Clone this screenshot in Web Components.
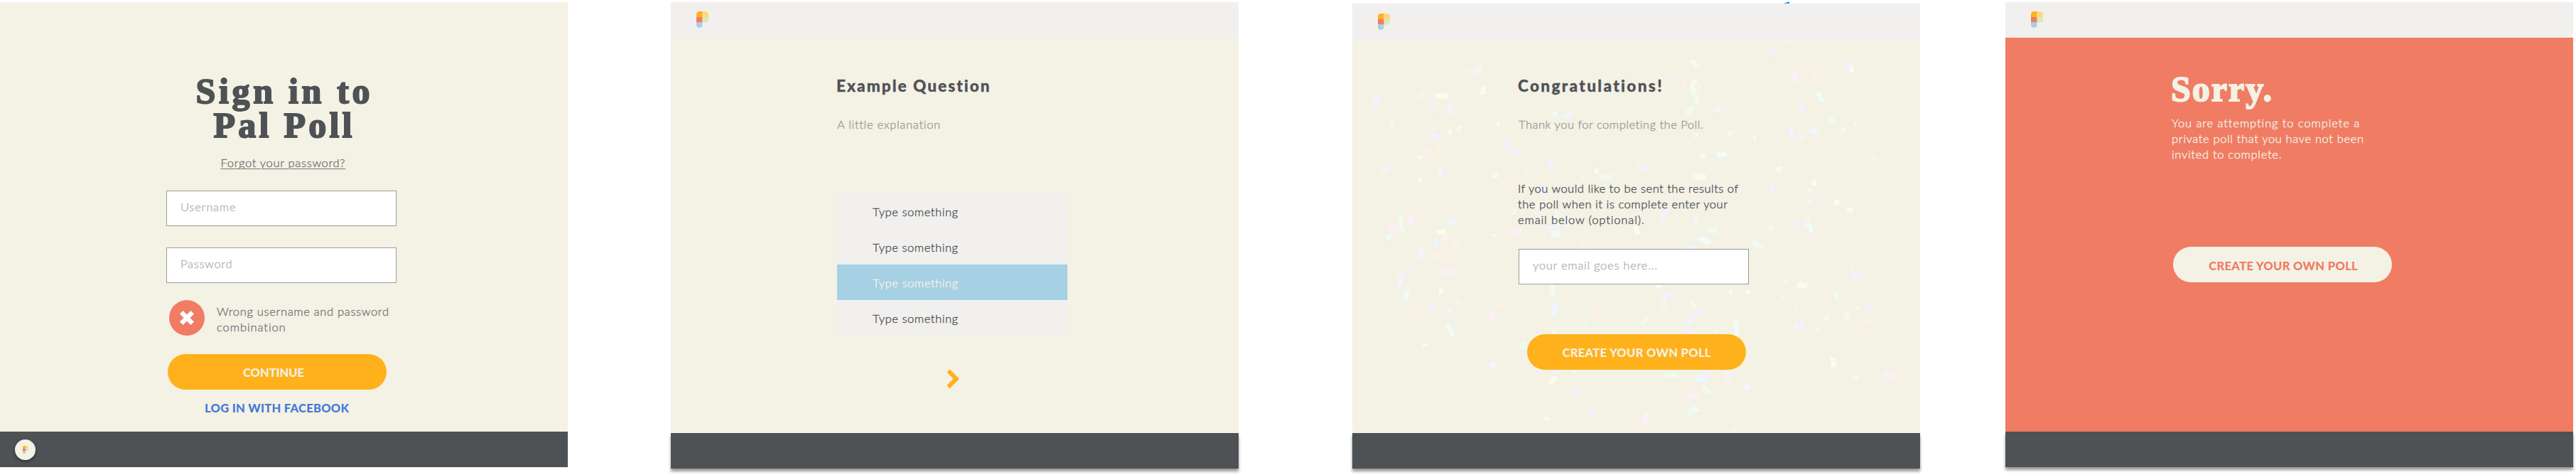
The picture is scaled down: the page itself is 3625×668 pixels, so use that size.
<!DOCTYPE html>
<html lang="en">
<head>
<meta charset="utf-8">
<title>Pal Poll</title>
<style>
body{margin:0;background:#fff;font-family:Lato,"Open Sans",sans-serif;font-size:16.5px;font-weight:300;line-height:22px;color:#4e5255;-webkit-text-stroke:.35px currentColor}
.board{display:flex;align-items:flex-start;width:3625px;height:668px;overflow:hidden}
</style>
</head>
<body>
<div class="board">
  <poll-screen style="--top:3px;--body:604px" plain>
    <sign-in-form></sign-in-form>
    <footer-badge slot="footer"></footer-badge>
  </poll-screen>
  <poll-screen style="--left:145px;--top:3px;--head:50px;--body:556px" raised>
    <question-view></question-view>
  </poll-screen>
  <poll-screen style="--left:160px;--top:5px;--head:51px;--body:553px;--logo:1px" raised>
    <confetti-layer slot="backdrop"></confetti-layer>
    <thanks-view></thanks-view>
  </poll-screen>
  <poll-screen style="--left:120px;--top:3px;--head:50px;--body:554px;--bg:#f07c64" raised>
    <sorry-view></sorry-view>
  </poll-screen>
</div>
<script>
const define = (name, html, setup) => customElements.define(name, class extends HTMLElement {
  connectedCallback() {
    if (this.shadowRoot) return;
    this.attachShadow({ mode: 'open' }).innerHTML = html;
    if (setup) setup(this, this.shadowRoot);
  }
});

/* One screen: optional top bar, body, footer */
define('poll-screen', `
<style>
:host{display:flex;flex-direction:column;flex:none;width:799px;margin-left:var(--left,0);margin-top:var(--top)}
header{box-sizing:border-box;height:var(--head);background:#f2f0ee;padding:calc(13px + var(--logo,0px)) 0 0 36px}
:host([plain]) header{display:none}
main{height:var(--body);background:var(--bg,#f4f1e5);display:grid;overflow:visible}
::slotted(confetti-layer),.content{grid-area:1/1}
.content{padding-left:234px;position:relative}
footer{height:50px;background:#4e5255;display:flex;align-items:center;padding-left:21px;box-sizing:border-box}
:host([raised]) footer{box-shadow:0 4px 4px rgba(0,0,0,.4)}
</style>
<header><poll-logo></poll-logo></header>
<main><slot name="backdrop"></slot><div class="content"><slot></slot></div></main>
<footer><slot name="footer"></slot></footer>`);

define('poll-logo', `
<style>:host{display:block;width:17px;height:23px}:host([small]){width:8px;height:11px}svg{display:block;width:100%;height:100%}</style>
<svg viewBox="0 0 17 23" preserveAspectRatio="none">
<path d="M8.4 0H12.5Q17 0 17 4.5V8H8.4Z" fill="#fdd87f"/><path d="M8.4 8H17V11Q17 15.8 12.5 15.8H8.4Z" fill="#dde7b8"/>
<path d="M0 4.5Q0 0 4.2 0H8.4V8H0Z" fill="#ffb11b"/><path d="M0 8H8.4V15.6H0Z" fill="#f07c64"/>
<path d="M0 15.6H8.4V19Q8.4 23 4.2 23T0 19Z" fill="#a6d0e4"/></svg>`);

define('footer-badge', `
<style>:host{display:grid;place-items:center;width:29px;height:29px;border-radius:50%;background:#f4f1e5;box-shadow:0 2px 4px rgba(0,0,0,.45)}</style>
<poll-logo small></poll-logo>`);

define('text-field', `
<style>:host{display:block;box-sizing:border-box;width:324px;height:50px;background:#fff;border:1px solid #9b9d9a;color:#b3b3b0;padding:11px 0 0 19px}</style>
<slot></slot>`);

define('pill-button', `
<style>:host{display:flex;justify-content:center;align-items:center;box-sizing:border-box;width:308px;height:50px;border-radius:25px;background:var(--fill,#ffb11b);color:var(--ink,#f4f1e5);font-weight:900;font-size:16.5px;padding-top:2px;-webkit-text-stroke:0}</style>
<slot></slot>`);

const display = `.display{font:bold 50px/48px "Liberation Serif",serif;-webkit-text-stroke:1.9px currentColor}`;

define('sign-in-form', `
<style>:host{display:block}${display}
.center{width:328px;display:flex;flex-direction:column;align-items:center;padding-top:101px}
.forgot{line-height:20px;margin-top:19px;color:#747674;text-decoration:underline;text-underline-offset:2px;text-decoration-thickness:1px}
text-field{margin-top:29px}text-field+text-field{margin-top:30px}
.error{display:flex;gap:17px;margin:24px 0 0 4px;color:#747674}
.error svg{width:50px;height:50px}.error div{padding-top:5px}
pill-button{margin:26px 0 0 2px;padding-right:10px}
.fb{margin:15px 0 0 54px;color:#4479d8;font-weight:900;font-size:16.5px;-webkit-text-stroke:0}</style>
<div class="center"><fit-text class="display" w="245">Sign in to</fit-text><fit-text class="display" w="195">Pal Poll</fit-text>
<fit-text class="forgot" w="175">Forgot your password?</fit-text></div>
<text-field><fit-text w="77.5">Username</fit-text></text-field>
<text-field><fit-text w="72.5">Password</fit-text></text-field>
<div class="error"><svg viewBox="0 0 50 50"><circle cx="25" cy="25" r="25" fill="#f07c64"/><path d="M17.3 17.3 32.7 32.7M32.7 17.3 17.3 32.7" stroke="#fff" stroke-width="6.4"/></svg>
<div><fit-text w="242">Wrong username and password</fit-text><fit-text w="97">combination</fit-text></div></div>
<pill-button><fit-text w="86">CONTINUE</fit-text></pill-button>
<fit-text class="fb" w="203">LOG IN WITH FACEBOOK</fit-text>`);

const titles = `.title{font-size:22.5px;font-weight:900;line-height:26px;padding-top:55px;margin-left:-1px}.sub{margin:31px 0 0 0;line-height:20px;color:#9b9c97}`;

define('question-view', `
<style>:host{display:block}${titles}
svg{display:block;margin:46px 0 0 153px}</style>
<fit-text class="title" w="216">Example Question</fit-text>
<fit-text class="sub" w="145">A little explanation</fit-text>
<option-list></option-list>
<svg width="20" height="30" viewBox="0 0 20 30"><path d="M3.5 3.3 14.7 14.7 3.5 26.2" fill="none" stroke="#ffb11b" stroke-width="6"/></svg>`);

define('option-list', `
<style>:host{display:block;width:324px;margin-top:87px;border-radius:10px;overflow:hidden;background:#f2f0ee}
.row{height:50px;box-sizing:border-box;padding:15px 0 0 50px}.on{background:#a6d0e4;color:#f4f1e5}</style>
<div class="row"><fit-text w="120">Type something</fit-text></div>
<div class="row"><fit-text w="120">Type something</fit-text></div>
<div class="row on"><fit-text w="120">Type something</fit-text></div>
<div class="row"><fit-text w="120">Type something</fit-text></div>`);

define('thanks-view', `
<style>:host{display:block}${titles}
.title{padding-top:52px}.para{margin:69px 0 0 -1px}text-field{margin-top:30px}pill-button{margin:70px 0 0 12px}
.cursor{position:absolute;left:606px;top:-54px}</style>
<svg class="cursor" width="10" height="3" viewBox="0 0 10 3"><path d="M0 3Q5 2 8.5 0L9.5 3Z" fill="#2196f3"/></svg>
<fit-text class="title" w="203">Congratulations!</fit-text>
<fit-text class="sub" w="260">Thank you for completing the Poll.</fit-text>
<div class="para"><fit-text w="310">If you would like to be sent the results of</fit-text><fit-text w="295">the poll when it is complete enter your</fit-text><fit-text w="178">email below (optional).</fit-text></div>
<text-field><fit-text w="175">your email goes here...</fit-text></text-field>
<pill-button><fit-text w="209">CREATE YOUR OWN POLL</fit-text></pill-button>`);

define('sorry-view', `
<style>:host{display:block;color:#f4f1e5}${display}
.display{padding-top:48px;margin-left:-1px}.para{margin:13px 0 0 0}
pill-button{margin:119px 0 0 2px;padding-top:3px;padding-left:2px;--fill:#f4f1e5;--ink:#f07c64}</style>
<fit-text class="display" w="142">Sorry.</fit-text>
<div class="para"><fit-text w="264">You are attempting to complete a</fit-text><fit-text w="270">private poll that you have not been</fit-text><fit-text w="154.5">invited to complete.</fit-text></div>
<pill-button><fit-text w="209.5">CREATE YOUR OWN POLL</fit-text></pill-button>`);

/* Confetti pieces: centre x, centre y, width, height, rotation, colour key */
const tints = { v:'#f4f0fd', p:'#fdf0f5', o:'#fdf1e7', m:'#f0fbee', a:'#f0fcf8', b:'#eff6fd', y:'#fdfde6', c:'#fdfaec' };
const pieces = `523 207 12 30 -20 o|284 228 12 16 0 v|346 300 34 20 0 p|364 292 10 24 15 m|373 381 13 38 3 y|87 425 13 50 12 v|212 401 13 36 0 p|262 405 32 22 0 y|241 429 12 28 -15 v|286 465 13 44 -8 b|271 460 12 24 20 o|294 380 4 18 10 m|130 525 15 28 -15 m|243 541 9 22 5 m|243 573 28 22 -20 v|285 558 12 22 0 y|309 542 7 20 25 y|251 511 12 7 0 v|323 530 4 22 10 v|413 522 6 22 0 y|252 623 13 28 0 o|222 632 20 20 10 p|206 663 12 16 0 a|434 612 12 48 -12 v|462 640 18 26 30 v|117 715 16 22 0 b|107 735 13 34 8 o|259 733 13 36 4 b|206 761 12 22 0 c|405 740 16 22 15 a|490 731 9 18 20 b|553 703 13 44 -20 v|526 749 12 22 0 o|448 778 24 22 -20 o|245 790 5 16 -20 v|569 336 8 24 5 b|600 482 18 34 30 b|564 481 11 22 0 a|544 570 12 28 0 o|550 607 11 26 -10 p|553 540 12 26 20 m|658 447 14 6 0 o|876 331 9 18 25 v|907 343 13 40 5 o|935 268 15 32 -25 c|933 360 16 46 5 c|936 405 13 65 -14 m|921 465 16 36 25 m|945 363 18 24 25 o|848 358 16 32 0 o|995 460 18 22 0 p|831 473 5 22 0 m|938 572 12 22 0 m|1029 562 14 22 15 m|928 607 10 12 0 v|956 659 14 22 0 c|1007 652 26 22 -15 a|1001 679 8 18 30 b|1142 222 15 22 10 v|1245 195 11 18 -20 o|1188 171 12 6 0 m|1187 273 7 7 0 b|1201 327 16 38 5 p|1253 321 13 48 6 o|1346 282 15 46 24 v|1353 292 10 28 0 y|1269 409 13 46 -17 a|1222 453 12 38 -5 v|1299 507 17 32 -28 m|1330 547 13 20 0 a|1252 554 20 26 -30 b|1193 563 12 52 -5 v|1219 580 15 26 -20 p|1094 584 6 22 -10 a|1376 603 15 32 18 o|1411 668 15 28 -20 p|1158 713 15 24 20 c|1239 696 12 7 0 o|1363 528 4 16 -20 y|788 702 12 32 -5 o|801 714 13 26 8 v|701 747 30 22 0 m|674 722 12 20 0 a|638 744 5 20 10 a|947 746 34 26 10 c|933 800 26 30 20 p|1140 796 13 32 0 v|1252 772 14 22 0 y|1241 800 5 22 5 y|1243 851 13 16 0 b|1271 828 4 20 0 b|1312 854 14 22 0 y|1347 886 15 22 0 y|938 933 13 28 8 b|855 905 13 62 17 v|815 798 13 34 20 p|530 805 18 40 0 v|597 940 13 50 0 b|568 920 13 60 3 m|561 965 30 26 0 v|520 870 16 38 -25 m|456 894 10 22 0 a|153 925 13 36 5 m|181 930 13 42 7 p|136 965 26 28 20 p|157 962 11 42 -10 m|122 1001 14 20 0 a|288 937 18 26 -25 b|262 980 24 22 0 y|273 1003 18 24 25 p|458 978 22 34 30 p|402 993 10 10 25 y|566 988 26 28 0 m|780 971 14 34 -15 y|982 972 28 24 10 m|1106 967 9 14 -20 v|1138 964 13 20 0 m|1211 941 14 28 -10 v|1233 940 15 40 8 p|1242 963 12 36 -10 a|962 1015 22 36 -40 a|247 1023 12 32 -10 b|299 1026 18 34 25 o|207 1070 13 42 12 p|247 1078 30 24 0 o|181 1138 6 22 20 v|146 1160 10 22 0 o|160 1162 11 46 5 v|153 1185 12 38 5 b|282 1147 32 24 -12 p|168 1244 13 38 7 a|260 1228 11 24 0 y|202 1295 16 26 -15 o|234 1291 13 22 0 v|307 1278 14 24 -15 p|281 1311 18 20 10 p|414 1284 18 36 -35 o|396 1332 12 46 5 p|285 1391 14 54 -18 a|219 1456 14 10 0 y|397 1542 13 32 0 b|406 1538 11 12 0 p|635 1038 13 44 -8 o|924 1045 18 26 25 b|1101 1033 17 38 -33 m|557 1222 12 48 2 a|563 1303 14 52 0 b|561 1400 12 30 0 m|676 1297 14 50 18 o|802 1354 14 38 24 m|643 1362 12 10 0 m|838 1204 18 24 -25 a|867 1250 26 24 25 v|852 1270 15 32 0 p|854 1302 16 20 0 p|931 1284 13 34 -8 m|938 1320 17 42 32 v|923 1357 12 22 10 b|918 1394 14 38 -20 v|880 1342 9 22 0 o|1046 1385 13 62 -3 a|990 1398 4 20 0 a|1030 1230 8 22 10 y|1077 1234 13 18 0 y|1096 1338 4 18 35 m|1178 1184 9 22 10 b|1221 1203 26 26 25 c|1169 1252 6 20 -15 m|1202 1294 7 22 10 m|1312 1247 13 38 -5 m|1352 1127 12 22 0 o|1364 1160 15 34 26 v|1398 1285 18 20 0 v|1367 1301 8 18 30 m|1339 1332 13 42 0 m|1286 1342 13 20 0 m|1391 1357 20 24 5 o|1203 1379 9 22 0 b|1219 1368 13 50 4 v|1261 1395 13 20 0 m|479 1459 15 38 15 m|564 1568 13 20 0 v|614 1568 9 22 30 m|558 1606 16 36 22 c|623 1648 13 34 3 v|872 1583 34 22 0 m|967 1583 13 46 5 v|949 1598 28 26 -35 b|1021 1588 13 42 -18 p|1074 1632 16 24 -15 b|967 1645 15 42 -24 m|931 1671 26 22 0 p|864 1669 8 18 30 v|933 1730 26 24 -25 a|923 1741 16 22 0 m|667 1738 18 22 10 v|542 1766 12 18 -15 y|805 1766 13 54 9 p|898 1773 13 14 20 v|1037 1812 14 22 0 p|1301 1516 12 14 0 y|1304 1537 14 24 -5 c|1363 1592 13 20 15 m|1450 1582 22 36 -45 p`;
define('confetti-layer', `
<style>:host{display:block}svg{display:block;width:799px;height:553px}</style>
<svg viewBox="25 168 1509 1659" preserveAspectRatio="none"></svg>`, (el, root) => {
  root.querySelector('svg').innerHTML = pieces.split('|').map(p => {
    const [x, y, w, h, r, c] = p.split(' ');
    return `<rect x="${-w / 2}" y="${-h / 2}" width="${w}" height="${h}" transform="translate(${x} ${y}) rotate(${r})" fill="${tints[c]}"/>`;
  }).join('');
});

/* A single line whose tracking is set so that it spans w pixels */
define('fit-text', `
<style>:host{display:block}span{display:inline-block;white-space:nowrap;text-decoration:inherit}</style><span><slot></slot></span>`, (el, root) => {
  const span = root.querySelector('span');
  const gap = (el.getAttribute('w') - span.getBoundingClientRect().width) / (el.textContent.length - 1);
  span.style.letterSpacing = gap + 'px';
  span.style.marginRight = -gap + 'px';
});
</script>
</body>
</html>
